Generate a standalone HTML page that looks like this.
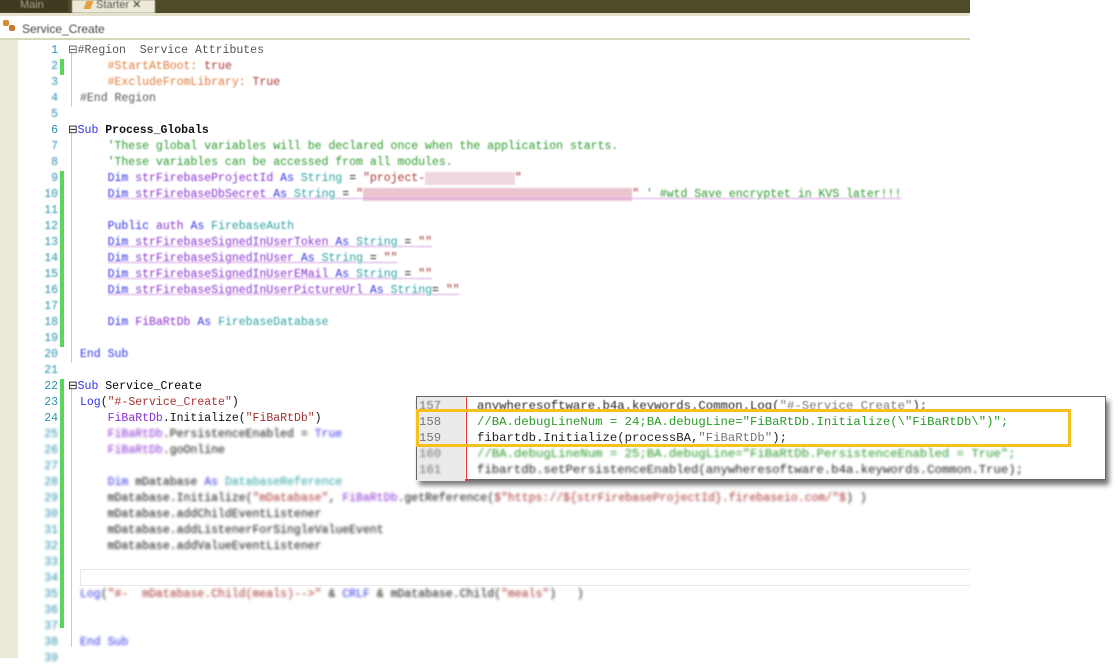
<!DOCTYPE html>
<html><head><meta charset="utf-8"><style>
*{margin:0;padding:0;box-sizing:border-box}
body{width:1118px;height:658px;background:#fff;position:relative;overflow:hidden;font-family:"Liberation Mono",monospace;font-size:11.5px}
.tabbar{position:absolute;left:0;top:0;width:970px;height:13px;background:#4f4a28}
.tab1{position:absolute;left:0;top:0;width:68px;height:12px;background:#3e3a20;color:#a9a48a;font:11px "Liberation Sans",sans-serif;padding-left:20px;line-height:10px;filter:blur(.5px)}
.tab2{position:absolute;left:72px;top:0;width:83px;height:13px;background:#ece9d8;color:#555;font:11px "Liberation Sans",sans-serif;padding-left:24px;line-height:10px;filter:blur(.4px)}
.tool{position:absolute;left:0;top:13px;width:970px;height:27px;background:#fff;border-top:3px solid #e4e2cc;border-bottom:2px solid #d4d7b8}
.tool span{position:absolute;left:22px;top:6px;font:12px "Liberation Sans",sans-serif;color:#444;filter:blur(.4px)}
.gut{position:absolute;left:0;top:40px;width:18px;height:618px;background:#ece9d8}
.l{position:absolute;left:0;height:16px;line-height:16px;white-space:pre;width:1000px;margin-top:2px}
.n{position:absolute;left:20px;width:38px;text-align:right;color:#2b91af}
.c{position:absolute;left:80px;color:#111}
.b{filter:blur(.9px)}
.b2{filter:blur(1.2px)}
.k{color:#3232e6}.t{color:#2ca0a0}.s{color:#a83232}.cm{color:#2a9a2a}.d{color:#e07a3a}.p{color:#8a30d0}
.u{text-decoration:underline;text-decoration-color:#d9a0e8}
.green{position:absolute;left:60px;width:4px;background:#5ad65a;margin-top:2px}
.fold{position:absolute;left:71px;width:1px;background:#ccc;margin-top:2px}
.pop{position:absolute;left:416px;top:396px;width:690px;height:84px;background:#fff;box-shadow:3px 5px 5px rgba(0,0,0,.55);border:1px solid #666}
.pg{position:absolute;left:0;top:0;width:48px;height:84px;background:#ebebeb}
.pr{position:absolute;left:49px;top:0;width:1px;height:84px;background:#e33}
.pl{position:absolute;left:0;height:16px;line-height:16px;white-space:pre;font-size:12.3px}
.pl .pn{position:absolute;left:2px;color:#777}
.pl .pc{position:absolute;left:60px;color:#222}
.yb{position:absolute;left:416px;top:409px;width:655px;height:38px;border:3px solid #f5c21b}
</style></head><body>
<div class="tabbar"></div>
<div class="tab1">Main</div>
<div class="tab2">Starter <span style="color:#333">✕</span></div>
<div style="position:absolute;left:85px;top:1px;width:7px;height:8px;background:#e8a040;transform:skewX(-20deg)"></div>
<div class="tool"><span>Service_Create</span></div>
<div style="position:absolute;left:3px;top:20px;width:6px;height:6px;background:#d88a30;border-radius:2px"></div>
<div style="position:absolute;left:9px;top:25px;width:6px;height:6px;background:#c47a30;border-radius:2px"></div>
<div class="gut"></div>

<div class="green" style="top:57px;height:16px"></div>
<div class="green" style="top:169px;height:32px"></div>
<div class="green" style="top:201px;height:144px"></div>
<div class="green" style="top:377px;height:249px"></div>
<div class="fold" style="top:49px;height:56px"></div>
<div class="fold" style="top:129px;height:232px"></div>
<div class="fold" style="top:385px;height:260px"></div>
<div style="position:absolute;left:80px;top:569px;width:890px;height:17px;border:1px solid #e8e8e8;border-right:none"></div>

<div class="l" style="top:41px"><span class="n">1</span><span class="c" style="left:68px;color:#555">⊟#Region  Service Attributes</span></div>
<div class="l b" style="top:57px"><span class="n">2</span><span class="c">    <span class="d">#StartAtBoot:</span> <span class="s">true</span></span></div>
<div class="l b" style="top:73px"><span class="n">3</span><span class="c">    <span class="d">#ExcludeFromLibrary:</span> <span class="s">True</span></span></div>
<div class="l b" style="top:89px"><span class="n">4</span><span class="c" style="color:#555">#End Region</span></div>
<div class="l b" style="top:105px"><span class="n">5</span></div>
<div class="l" style="top:121px"><span class="n">6</span><span class="c" style="left:68px">⊟<span class="k">Sub</span> <b>Process_Globals</b></span></div>
<div class="l b" style="top:137px"><span class="n">7</span><span class="c cm">    'These global variables will be declared once when the application starts.</span></div>
<div class="l b" style="top:153px"><span class="n">8</span><span class="c cm">    'These variables can be accessed from all modules.</span></div>
<div class="l b" style="top:169px"><span class="n">9</span><span class="c">    <span class="k">Dim</span> <span class="p">strFirebaseProjectId</span> <span class="k">As</span> <span class="t">String</span> = <span class="s">"project-<span style="background:#f1d8e0">             </span>"</span></span></div>
<div class="l b" style="top:185px"><span class="n">10</span><span class="c">    <span class="u"><span class="k">Dim</span> <span class="p">strFirebaseDbSecret</span> <span class="k">As</span> <span class="t">String</span> = <span class="s">"<span style="background:#ecc4d0">                                       </span>"</span> <span class="cm">' #wtd Save encryptet in KVS later!!!</span></span></span></div>
<div class="l b" style="top:201px"><span class="n">11</span></div>
<div class="l b" style="top:217px"><span class="n">12</span><span class="c">    <span class="k">Public</span> <span class="p">auth</span> <span class="k">As</span> <span class="t">FirebaseAuth</span></span></div>
<div class="l b" style="top:233px"><span class="n">13</span><span class="c">    <span class="u"><span class="k">Dim</span> <span class="p">strFirebaseSignedInUserToken</span> <span class="k">As</span> <span class="t">String</span> = <span class="s">""</span></span></span></div>
<div class="l b" style="top:249px"><span class="n">14</span><span class="c">    <span class="u"><span class="k">Dim</span> <span class="p">strFirebaseSignedInUser</span> <span class="k">As</span> <span class="t">String</span> = <span class="s">""</span></span></span></div>
<div class="l b" style="top:265px"><span class="n">15</span><span class="c">    <span class="u"><span class="k">Dim</span> <span class="p">strFirebaseSignedInUserEMail</span> <span class="k">As</span> <span class="t">String</span> = <span class="s">""</span></span></span></div>
<div class="l b" style="top:281px"><span class="n">16</span><span class="c">    <span class="u"><span class="k">Dim</span> <span class="p">strFirebaseSignedInUserPictureUrl</span> <span class="k">As</span> <span class="t">String</span>= <span class="s">""</span></span></span></div>
<div class="l b" style="top:297px"><span class="n">17</span></div>
<div class="l b" style="top:313px"><span class="n">18</span><span class="c">    <span class="k">Dim</span> <span class="p">FiBaRtDb</span> <span class="k">As</span> <span class="t">FirebaseDatabase</span></span></div>
<div class="l b" style="top:329px"><span class="n">19</span></div>
<div class="l b" style="top:345px"><span class="n">20</span><span class="c k">End Sub</span></div>
<div class="l b" style="top:361px"><span class="n">21</span></div>
<div class="l" style="top:377px"><span class="n">22</span><span class="c" style="left:68px">⊟<span class="k">Sub</span> <b style="font-weight:normal;color:#000">Service_Create</b></span></div>
<div class="l" style="top:393px"><span class="n">23</span><span class="c"><span class="k">Log</span>(<span class="s">"#-Service_Create"</span>)</span></div>
<div class="l" style="top:409px"><span class="n">24</span><span class="c">    <span class="p">FiBaRtDb</span>.Initialize(<span class="s">"FiBaRtDb"</span>)</span></div>
<div class="l b2" style="top:425px"><span class="n">25</span><span class="c">    <span class="p">FiBaRtDb</span>.PersistenceEnabled = <span class="k">True</span></span></div>
<div class="l b2" style="top:441px"><span class="n">26</span><span class="c">    <span class="p">FiBaRtDb</span>.goOnline</span></div>
<div class="l b2" style="top:457px"><span class="n">27</span></div>
<div class="l b2" style="top:473px"><span class="n">28</span><span class="c">    <span class="k">Dim</span> mDatabase <span class="k">As</span> <span class="t">DatabaseReference</span></span></div>
<div class="l b2" style="top:489px"><span class="n">29</span><span class="c">    mDatabase.Initialize(<span class="s">"mDatabase"</span>, <span class="p">FiBaRtDb</span>.getReference(<span class="s">$"https://${strFirebaseProjectId}.firebaseio.com/"$</span>) )</span></div>
<div class="l b2" style="top:505px"><span class="n">30</span><span class="c">    mDatabase.addChildEventListener</span></div>
<div class="l b2" style="top:521px"><span class="n">31</span><span class="c">    mDatabase.addListenerForSingleValueEvent</span></div>
<div class="l b2" style="top:537px"><span class="n">32</span><span class="c">    mDatabase.addValueEventListener</span></div>
<div class="l b2" style="top:553px"><span class="n">33</span></div>
<div class="l b2" style="top:569px"><span class="n">34</span></div>
<div class="l b2" style="top:585px"><span class="n">35</span><span class="c"><span class="k">Log</span>(<span class="s">"#-  mDatabase.Child(meals)-->"</span> &amp; <span class="k">CRLF</span> &amp; mDatabase.Child(<span class="s">"meals"</span>)   )</span></div>
<div class="l b2" style="top:601px"><span class="n">36</span></div>
<div class="l b2" style="top:617px"><span class="n">37</span></div>
<div class="l b2" style="top:633px"><span class="n">38</span><span class="c k">End Sub</span></div>
<div class="l b2" style="top:649px"><span class="n">39</span></div>

<div class="pop">
<div class="pg"></div><div class="pr"></div>
<div class="pl" style="top:1px;filter:blur(.5px)"><span class="pn">157</span><span class="pc">anywheresoftware.b4a.keywords.Common.Log(<span style="color:#777">"#-Service_Create"</span>);</span></div>
<div class="pl" style="top:17px"><span class="pn">158</span><span class="pc" style="color:#2a9a2a">//BA.debugLineNum = 24;BA.debugLine="FiBaRtDb.Initialize(\"FiBaRtDb\")";</span></div>
<div class="pl" style="top:33px"><span class="pn">159</span><span class="pc">fibartdb.Initialize(processBA,<span style="color:#777">"FiBaRtDb"</span>);</span></div>
<div class="pl" style="top:49px;filter:blur(1px)"><span class="pn">160</span><span class="pc" style="color:#2a9a2a">//BA.debugLineNum = 25;BA.debugLine="FiBaRtDb.PersistenceEnabled = True";</span></div>
<div class="pl" style="top:65px;filter:blur(1px)"><span class="pn">161</span><span class="pc">fibartdb.setPersistenceEnabled(anywheresoftware.b4a.keywords.Common.True);</span></div>
</div>
<div class="yb"></div>
</body></html>
